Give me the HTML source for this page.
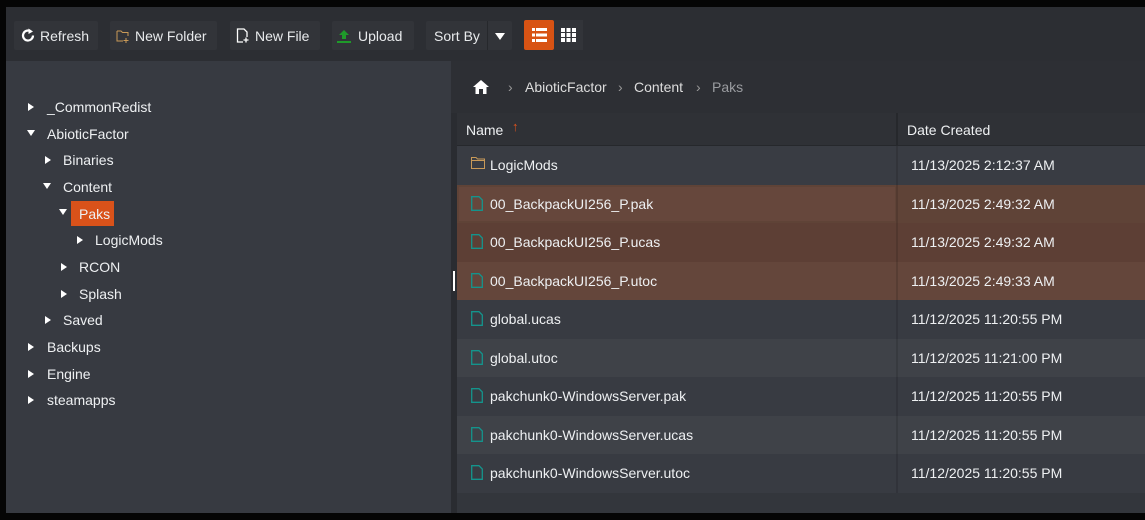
<!DOCTYPE html>
<html><head><meta charset="utf-8"><style>
*{margin:0;padding:0;box-sizing:border-box}
body{width:1145px;height:520px;background:#050505;font-family:"Liberation Sans",sans-serif;color:#eef0f2;overflow:hidden;position:relative;font-size:14px}
.a{position:absolute}
.tb{left:6px;top:7px;width:1139px;height:54px;background:#2c2e33}
.btn{position:absolute;top:21px;height:29px;background:#323439;border-radius:2px;display:flex;align-items:center;font-size:14px;color:#e8eaec}
.left{left:6px;top:61px;width:445px;height:452px;background:#373a41}
.div{left:451px;top:61px;width:6px;height:452px;background:#2a2c31}
.right{left:457px;top:61px;width:688px;height:452px;background:#33363c}
.bc{left:451px;top:61px;width:694px;height:52px;background:#2d2f34}
.tr{position:absolute;font-size:14px;color:#eef0f2}
.tri{position:absolute;width:0;height:0}
.tri.r{border-left:6px solid #fff;border-top:4px solid transparent;border-bottom:4px solid transparent}
.tri.d{border-top:6px solid #fff;border-left:4px solid transparent;border-right:4px solid transparent}
.row{position:absolute;left:457px;width:688px;height:38.5px}
.row .n{position:absolute;left:33px;top:11px}
.row .d{position:absolute;left:454px;top:11px}
.row svg{position:absolute;left:14px;top:11px}
.row .sep{position:absolute;left:439px;top:0;width:2px;height:100%;background:rgba(0,0,0,.12)}
</style></head><body>
<div class="a tb"></div>
<div class="btn" style="left:14px;width:84px"><svg style="margin-left:7px" width="14" height="15" viewBox="0 0 14 15"><path d="M9.5 3.2A5 5 0 1 0 12 7.5" fill="none" stroke="#fff" stroke-width="2.2"/><path d="M7.5 0.5L12 3.5 7.5 6Z" fill="#fff"/></svg><span style="margin-left:5px">Refresh</span></div>
<div class="btn" style="left:110px;width:107px"><svg style="margin-left:6px" width="14" height="14" viewBox="0 0 14 14"><path d="M1 2h4l1.5 1.5H12V7M1 2v10h6" fill="none" stroke="#c99a58" stroke-width="1"/><path d="M10 9v5M7.5 11.5h5" stroke="#c99a58" stroke-width="1"/></svg><span style="margin-left:5px">New Folder</span></div>
<div class="btn" style="left:230px;width:90px"><svg style="margin-left:6px" width="14" height="15" viewBox="0 0 14 15"><path d="M7 14H1.5V1H8l3 3v5" fill="none" stroke="#fff" stroke-width="1.3"/><path d="M10 9.5v5M7.5 12h5" stroke="#fff" stroke-width="1.3"/></svg><span style="margin-left:5px">New File</span></div>
<div class="btn" style="left:332px;width:82px"><svg style="margin-left:5px" width="14" height="14" viewBox="0 0 14 14"><path d="M7 1L12 6H9v4H5V6H2Z" fill="#1f9a2a"/><rect x="0" y="12" width="14" height="2" fill="#1f9a2a"/></svg><span style="margin-left:7px">Upload</span></div>
<div class="btn" style="left:426px;width:86px"><span style="margin-left:8px">Sort By</span><div style="position:absolute;left:61px;top:0;width:1px;height:29px;background:#26282c"></div><div class="tri d" style="position:absolute;left:69px;top:12px;border-top-width:7px;border-left-width:5px;border-right-width:5px"></div></div>
<div class="a" style="left:524px;top:20px;width:30px;height:30px;background:#d85314;border-radius:2px"></div>
<svg class="a" style="left:532px;top:28px" width="15" height="14" viewBox="0 0 15 14"><g fill="#fff"><rect y="0" width="15" height="3"/><rect y="5.5" width="15" height="3"/><rect y="11" width="15" height="3"/></g><g fill="#d85314"><rect x="3" y="0" width="1" height="14"/></g></svg>
<div class="a" style="left:554px;top:20px;width:29px;height:30px;background:#323439"></div>
<svg class="a" style="left:561px;top:28px" width="15" height="14" viewBox="0 0 15 14"><g fill="#fff"><rect x="0" y="0" width="4" height="4"/><rect x="5.5" y="0" width="4" height="4"/><rect x="11" y="0" width="4" height="4"/><rect x="0" y="5" width="4" height="4"/><rect x="5.5" y="5" width="4" height="4"/><rect x="11" y="5" width="4" height="4"/><rect x="0" y="10" width="4" height="4"/><rect x="5.5" y="10" width="4" height="4"/><rect x="11" y="10" width="4" height="4"/></g></svg>

<div class="a left"></div>
<div class="a div"></div>
<div class="a" style="left:453px;top:271px;width:2px;height:20px;background:#fff"></div>
<div class="a right"></div>
<div class="a bc"></div>

<div class="tri r" style="left:28px;top:103px"></div><div class="tr" style="left:47px;top:99px">_CommonRedist</div>
<div class="tri d" style="left:27px;top:130px"></div><div class="tr" style="left:47px;top:126px">AbioticFactor</div>
<div class="tri r" style="left:45px;top:156px"></div><div class="tr" style="left:63px;top:152px">Binaries</div>
<div class="tri d" style="left:43px;top:183px"></div><div class="tr" style="left:63px;top:179px">Content</div>
<div class="tri d" style="left:59px;top:209px"></div><div class="a" style="left:71px;top:201px;width:43px;height:25px;background:#d9521a"></div><div class="tr" style="left:79px;top:206px">Paks</div>
<div class="tri r" style="left:77px;top:236px"></div><div class="tr" style="left:95px;top:232px">LogicMods</div>
<div class="tri r" style="left:61px;top:263px"></div><div class="tr" style="left:79px;top:259px">RCON</div>
<div class="tri r" style="left:61px;top:290px"></div><div class="tr" style="left:79px;top:286px">Splash</div>
<div class="tri r" style="left:45px;top:316px"></div><div class="tr" style="left:63px;top:312px">Saved</div>
<div class="tri r" style="left:28px;top:343px"></div><div class="tr" style="left:47px;top:339px">Backups</div>
<div class="tri r" style="left:28px;top:370px"></div><div class="tr" style="left:47px;top:366px">Engine</div>
<div class="tri r" style="left:28px;top:396px"></div><div class="tr" style="left:47px;top:392px">steamapps</div>

<svg class="a" style="left:473px;top:80px" width="16" height="14" viewBox="0 0 16 14"><path d="M8 0L16 7h-2.5v7H10V9H6v5H2.5V7H0Z" fill="#fff"/></svg>
<div class="tr" style="left:508px;top:79px;color:#999">›</div>
<div class="tr" style="left:525px;top:79px;color:#ddd">AbioticFactor</div>
<div class="tr" style="left:618px;top:79px;color:#999">›</div>
<div class="tr" style="left:634px;top:79px;color:#ddd">Content</div>
<div class="tr" style="left:696px;top:79px;color:#999">›</div>
<div class="tr" style="left:712px;top:79px;color:#9a9ca0">Paks</div>

<div class="a" style="left:457px;top:113px;width:688px;height:33px;background:#2f3136;border-bottom:1px solid #26282c"></div>
<div class="a" style="left:896px;top:113px;width:2px;height:33px;background:#26282c"></div>
<div class="tr" style="left:466px;top:122px">Name</div>
<div class="tr" style="left:512px;top:119px;color:#e0531c;font-size:13px">↑</div>
<div class="tr" style="left:907px;top:122px">Date Created</div>

<div class="row" style="top:146px;background:#393c43"><svg width="14" height="12" viewBox="0 0 14 12"><path d="M0.5 0.5h4.5l1.5 1.5h7v9.5H0.5Z M0.5 3.5h13" fill="none" stroke="#c99a58"/></svg><span class="n">LogicMods</span><span class="d">11/13/2025 2:12:37 AM</span><div class="sep"></div></div>
<div class="row" style="top:184.5px;background:#5f4337"><div style="position:absolute;left:2px;top:2px;width:436px;height:34px;background:#66473c"></div><svg width="12" height="15" viewBox="0 0 12 15"><path d="M0.7 0.7h7.3l3.3 3.3v10.3H0.7Z" fill="none" stroke="#14948c" stroke-width="1.3"/></svg><span class="n">00_BackpackUI256_P.pak</span><span class="d">11/13/2025 2:49:32 AM</span><div class="sep"></div></div>
<div class="row" style="top:223px;background:#5d3f35"><svg width="12" height="15" viewBox="0 0 12 15"><path d="M0.7 0.7h7.3l3.3 3.3v10.3H0.7Z" fill="none" stroke="#14948c" stroke-width="1.3"/></svg><span class="n">00_BackpackUI256_P.ucas</span><span class="d">11/13/2025 2:49:32 AM</span><div class="sep"></div></div>
<div class="row" style="top:261.5px;background:#64463b"><svg width="12" height="15" viewBox="0 0 12 15"><path d="M0.7 0.7h7.3l3.3 3.3v10.3H0.7Z" fill="none" stroke="#14948c" stroke-width="1.3"/></svg><span class="n">00_BackpackUI256_P.utoc</span><span class="d">11/13/2025 2:49:33 AM</span><div class="sep"></div></div>
<div class="row" style="top:300px;background:#383b42"><svg width="12" height="15" viewBox="0 0 12 15"><path d="M0.7 0.7h7.3l3.3 3.3v10.3H0.7Z" fill="none" stroke="#14948c" stroke-width="1.3"/></svg><span class="n">global.ucas</span><span class="d">11/12/2025 11:20:55 PM</span><div class="sep"></div></div>
<div class="row" style="top:338.5px;background:#3f4248"><svg width="12" height="15" viewBox="0 0 12 15"><path d="M0.7 0.7h7.3l3.3 3.3v10.3H0.7Z" fill="none" stroke="#14948c" stroke-width="1.3"/></svg><span class="n">global.utoc</span><span class="d">11/12/2025 11:21:00 PM</span><div class="sep"></div></div>
<div class="row" style="top:377px;background:#383b42"><svg width="12" height="15" viewBox="0 0 12 15"><path d="M0.7 0.7h7.3l3.3 3.3v10.3H0.7Z" fill="none" stroke="#14948c" stroke-width="1.3"/></svg><span class="n">pakchunk0-WindowsServer.pak</span><span class="d">11/12/2025 11:20:55 PM</span><div class="sep"></div></div>
<div class="row" style="top:415.5px;background:#3f4248"><svg width="12" height="15" viewBox="0 0 12 15"><path d="M0.7 0.7h7.3l3.3 3.3v10.3H0.7Z" fill="none" stroke="#14948c" stroke-width="1.3"/></svg><span class="n">pakchunk0-WindowsServer.ucas</span><span class="d">11/12/2025 11:20:55 PM</span><div class="sep"></div></div>
<div class="row" style="top:454px;background:#383b42"><svg width="12" height="15" viewBox="0 0 12 15"><path d="M0.7 0.7h7.3l3.3 3.3v10.3H0.7Z" fill="none" stroke="#14948c" stroke-width="1.3"/></svg><span class="n">pakchunk0-WindowsServer.utoc</span><span class="d">11/12/2025 11:20:55 PM</span><div class="sep"></div></div>
</body></html>
